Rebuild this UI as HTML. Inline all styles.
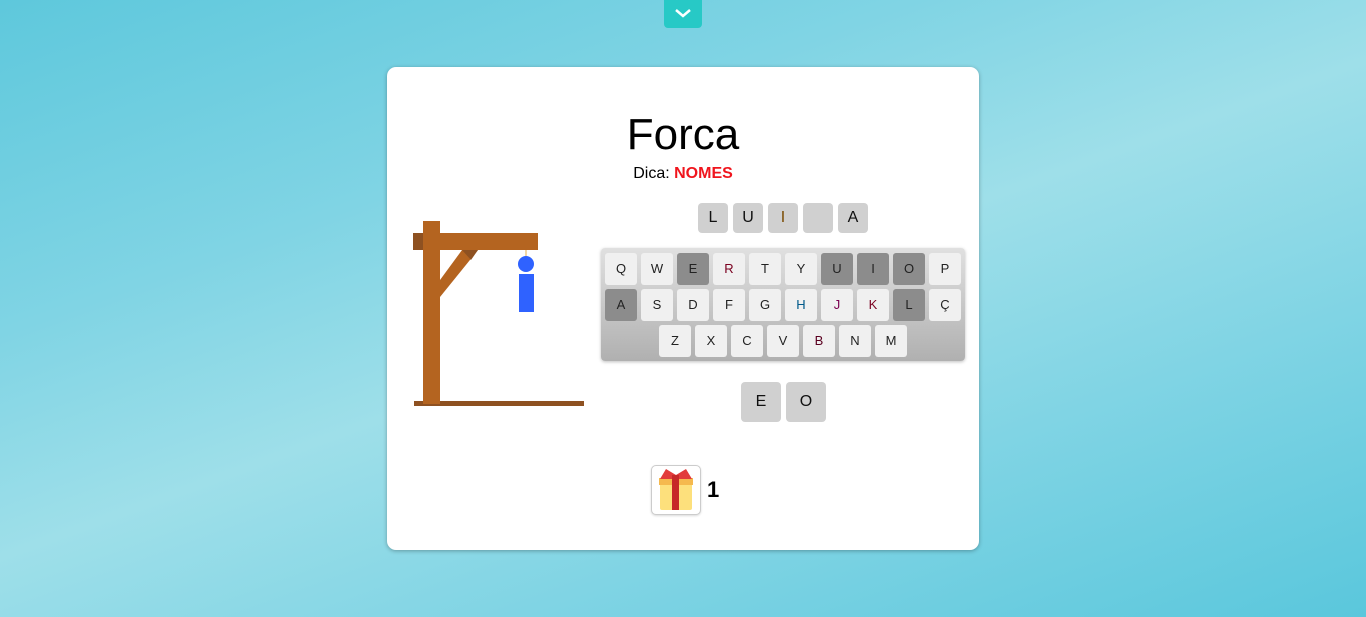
<!DOCTYPE html>
<html><head><meta charset="utf-8"><style>
*{margin:0;padding:0;box-sizing:border-box}
body{width:1366px;height:617px;overflow:hidden;position:relative;font-family:"Liberation Sans",sans-serif;
background:linear-gradient(160deg,#5ec8dc 0%,#80d4e4 30%,#9edfe9 50%,#80d4e4 72%,#5ac7dc 100%)}
.tab{position:absolute;left:664px;top:0;width:38px;height:28px;background:#27c9c6;border-radius:0 0 4px 4px}
.card{position:absolute;left:387px;top:67px;width:592px;height:483px;background:#fff;border-radius:9px;box-shadow:0 1px 4px rgba(0,0,0,.3)}
.a{position:absolute}
h1{position:absolute;left:0;width:592px;top:43px;text-align:center;font-size:44px;font-weight:normal;color:#000;letter-spacing:0}
.dica{position:absolute;left:0;width:592px;top:98px;text-align:center;font-size:16px;color:#000}
.dica b{color:#f0151d;font-weight:bold}
.w{position:absolute;width:30px;height:30px;background:#d0d0d0;border-radius:4px;text-align:center;line-height:30px;font-size:16px;color:#111}
.kb{position:absolute;left:214px;top:181px;width:364px;height:113px;border-radius:4px;background:linear-gradient(#e0e0e0,#b0b0b0);box-shadow:0 1px 3px rgba(0,0,0,.25)}
.k{position:absolute;width:32px;height:32px;background:#f0f0f0;border-radius:3px;text-align:center;line-height:32px;font-size:13px;color:#222}
.k.d{background:#8c8c8c}
.g{position:absolute;width:40px;height:40px;background:#d0d0d0;border-radius:4px;text-align:center;line-height:40px;font-size:16px;color:#111}
.gift{position:absolute;left:264px;top:398px;width:50px;height:50px;border:1px solid #ccc;border-radius:5px;background:#fff;box-shadow:0 1px 2px rgba(0,0,0,.15)}
</style></head><body>
<div class="tab"><svg width="38" height="28"><path d="M12 10 L19 16 L26 10" stroke="#fff" stroke-width="2.5" fill="none"/></svg></div>
<div class="card">
<h1>Forca</h1>
<div class="dica">Dica: <b>NOMES</b></div>
<svg class="a" style="left:0;top:0" width="592" height="483">
<rect x="27" y="334" width="170" height="5" fill="#8e5121"/>
<rect x="36" y="154" width="17" height="183" fill="#b46420"/>
<rect x="26" y="166" width="125" height="17" fill="#b46420"/>
<rect x="26" y="166" width="10" height="17" fill="#8e5121"/>
<polygon points="53,213 75,183 91,183 53,230" fill="#b46420"/>
<polygon points="75,183 91,183 84,193" fill="#8e5121"/>
<line x1="139" y1="183" x2="139" y2="190" stroke="#e7b04a" stroke-width="1"/>
<circle cx="139" cy="197" r="8" fill="#2f62ff"/>
<rect x="132" y="207" width="15" height="38" fill="#2f62ff"/>
</svg>
<div class="w" style="left:311px;top:136px">L</div>
<div class="w" style="left:346px;top:136px">U</div>
<div class="w" style="left:381px;top:136px;color:#7a4a00">I</div>
<div class="w" style="left:416px;top:136px"></div>
<div class="w" style="left:451px;top:136px">A</div>
<div class="kb">
<div class="k" style="left:4px;top:5px">Q</div><div class="k" style="left:40px;top:5px">W</div><div class="k d" style="left:76px;top:5px">E</div><div class="k" style="left:112px;top:5px;color:#7a0020">R</div><div class="k" style="left:148px;top:5px">T</div><div class="k" style="left:184px;top:5px">Y</div><div class="k d" style="left:220px;top:5px">U</div><div class="k d" style="left:256px;top:5px">I</div><div class="k d" style="left:292px;top:5px">O</div><div class="k" style="left:328px;top:5px">P</div>
<div class="k d" style="left:4px;top:41px">A</div><div class="k" style="left:40px;top:41px">S</div><div class="k" style="left:76px;top:41px">D</div><div class="k" style="left:112px;top:41px">F</div><div class="k" style="left:148px;top:41px">G</div><div class="k" style="left:184px;top:41px;color:#005a8a">H</div><div class="k" style="left:220px;top:41px;color:#7a0050">J</div><div class="k" style="left:256px;top:41px;color:#7a0020">K</div><div class="k d" style="left:292px;top:41px">L</div><div class="k" style="left:328px;top:41px">Ç</div>
<div class="k" style="left:58px;top:77px">Z</div><div class="k" style="left:94px;top:77px">X</div><div class="k" style="left:130px;top:77px">C</div><div class="k" style="left:166px;top:77px">V</div><div class="k" style="left:202px;top:77px;color:#5a0020">B</div><div class="k" style="left:238px;top:77px">N</div><div class="k" style="left:274px;top:77px">M</div>
</div>
<div class="g" style="left:354px;top:315px">E</div>
<div class="g" style="left:399px;top:315px">O</div>
<div class="gift"><svg width="48" height="48" viewBox="0 0 48 48">
<rect x="8" y="15" width="32" height="29" rx="2" fill="#fde07c"/>
<rect x="7" y="12" width="34" height="7" fill="#f5b94e"/>
<path d="M8 13 L14 3 L24 9 L34 3 L40 13 Z" fill="#e23b3b"/>
<rect x="20" y="9" width="7" height="35" fill="#c62828"/>
</svg></div>
<div class="a" style="left:320px;top:410px;font-size:22px;font-weight:bold;color:#000">1</div>
</div>
</body></html>
